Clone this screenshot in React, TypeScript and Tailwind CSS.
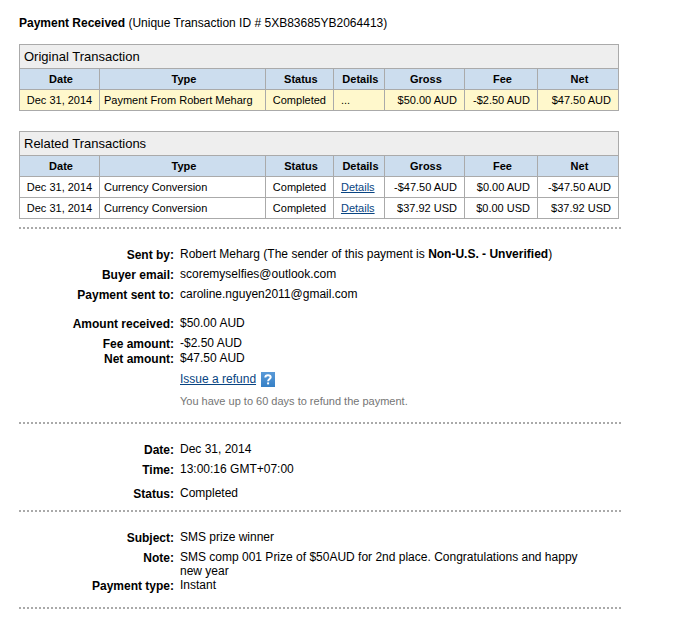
import type { ReactNode } from "react"

type Transaction = {
  date: string
  type: string
  status: string
  hasDetails: boolean
  gross: string
  fee: string
  net: string
}

const original: Transaction[] = [
  {
    date: "Dec 31, 2014",
    type: "Payment From Robert Meharg",
    status: "Completed",
    hasDetails: false,
    gross: "$50.00 AUD",
    fee: "-$2.50 AUD",
    net: "$47.50 AUD",
  },
]

const related: Transaction[] = [
  {
    date: "Dec 31, 2014",
    type: "Currency Conversion",
    status: "Completed",
    hasDetails: true,
    gross: "-$47.50 AUD",
    fee: "$0.00 AUD",
    net: "-$47.50 AUD",
  },
  {
    date: "Dec 31, 2014",
    type: "Currency Conversion",
    status: "Completed",
    hasDetails: true,
    gross: "$37.92 USD",
    fee: "$0.00 USD",
    net: "$37.92 USD",
  },
]

const columns = [
  { name: "Date", width: "w-[80px]" },
  { name: "Type", width: "w-auto" },
  { name: "Status", width: "w-[68px]" },
  { name: "Details", width: "w-[51px]" },
  { name: "Gross", width: "w-[80px]" },
  { name: "Fee", width: "w-[73px]" },
  { name: "Net", width: "w-[81px]" },
]

const cell = "border border-[#aaa] whitespace-nowrap"

function TransactionTable({
  title,
  rows,
  highlight = false,
}: {
  title: string
  rows: Transaction[]
  highlight?: boolean
}) {
  return (
    <table className="w-full table-fixed border-collapse text-[11px] leading-[14px]">
      <colgroup>
        {columns.map((c) => (
          <col key={c.name} className={c.width} />
        ))}
      </colgroup>
      <thead>
        <tr className="h-6 bg-[#eee]">
          <th colSpan={7} className={`${cell} pl-1 text-left text-[13px] font-normal`}>
            {title}
          </th>
        </tr>
        <tr className="h-[21px] bg-[#cde]">
          {columns.map((c) => (
            <th key={c.name} scope="col" className={`${cell} pl-[3px] text-center font-bold`}>
              {c.name}
            </th>
          ))}
        </tr>
      </thead>
      <tbody>
        {rows.map((row, i) => (
          <tr key={i} className={highlight ? "h-[21px] bg-[#fff8cc]" : "h-[21px] bg-white"}>
            <td className={`${cell} text-center`}>{row.date}</td>
            <td className={`${cell} pl-1`}>{row.type}</td>
            <td className={`${cell} text-center`}>{row.status}</td>
            <td className={`${cell} pl-[7px]`}>
              {row.hasDetails ? (
                <a href="#details" className="text-[#084482] underline">
                  Details
                </a>
              ) : (
                "..."
              )}
            </td>
            <td className={`${cell} pr-[7px] text-right`}>{row.gross}</td>
            <td className={`${cell} pr-[7px] text-right`}>{row.fee}</td>
            <td className={`${cell} pr-[7px] text-right`}>{row.net}</td>
          </tr>
        ))}
      </tbody>
    </table>
  )
}

function Divider() {
  return (
    <hr className="h-0.5 border-0 bg-[repeating-linear-gradient(to_right,#aaa_0px,#aaa_2px,transparent_2px,transparent_4px)]" />
  )
}

function Field({ label, className = "", children }: { label: string; className?: string; children: ReactNode }) {
  return (
    <div className={`flex gap-1.5 ${className}`}>
      <dt className="w-[155px] shrink-0 pt-px text-right font-bold">{label}:</dt>
      <dd className="min-w-0 max-w-[420px]">{children}</dd>
    </div>
  )
}

export default function App() {
  return (
    <main className="min-h-screen bg-white px-[19px] pt-4 pb-3 font-['Liberation_Sans',Arial,sans-serif] text-[12px] leading-[14px] text-black">
      <div className="max-w-[602px]">
        <h1 className="mb-[14px]">
          <strong>Payment Received</strong> (Unique Transaction ID # 5XB83685YB2064413)
        </h1>

        <div className="mb-2 flex flex-col gap-5 pr-0.5">
          <TransactionTable title="Original Transaction" rows={original} highlight />
          <TransactionTable title="Related Transactions" rows={related} />
        </div>

        <Divider />
        <dl className="pt-[18px]">
          <Field label="Sent by" className="mb-[5px]">
            Robert Meharg (The sender of this payment is <strong>Non-U.S. - Unverified</strong>)
          </Field>
          <Field label="Buyer email" className="mb-[5px]">
            scoremyselfies@outlook.com
          </Field>
          <Field label="Payment sent to" className="mb-[14px]">
            caroline.nguyen2011@gmail.com
          </Field>
          <Field label="Amount received" className="mb-[5px]">
            $50.00 AUD
          </Field>
          <Field label="Fee amount">-$2.50 AUD</Field>
          <Field label="Net amount">$47.50 AUD</Field>
        </dl>
        <div className="pt-1.5 pb-[14px] pl-[161px]">
          <div className="flex gap-[5px]">
            <a href="#refund" className="text-[#084482] underline">
              Issue a refund
            </a>
            <button type="button" aria-label="Help" className="h-[15px] w-[14px]">
              <svg viewBox="0 0 14 15" className="h-[15px] w-[14px]" fill="none">
                <defs>
                  <linearGradient id="help" x1="0" y1="0" x2="0" y2="1">
                    <stop offset="0" stopColor="#5a9ad8" />
                    <stop offset="1" stopColor="#3580c6" />
                  </linearGradient>
                </defs>
                <rect width="14" height="15" fill="url(#help)" />
                <path
                  d="M4.3 5.6C4.3 4 5.3 3.2 7 3.2S9.7 4 9.7 5.3C9.7 7 7.1 7 7.1 9.2"
                  stroke="#fff"
                  strokeWidth="2"
                />
                <path d="M7.1 10.4v2" stroke="#fff" strokeWidth="2" />
              </svg>
            </button>
          </div>
          <p className="mt-[7px] text-[11px] text-[#757575]">You have up to 60 days to refund the payment.</p>
        </div>

        <Divider />
        <dl className="pt-[18px] pb-[9px]">
          <Field label="Date" className="mb-[5px]">
            Dec 31, 2014
          </Field>
          <Field label="Time" className="mb-[9px]">
            13:00:16 GMT+07:00
          </Field>
          <Field label="Status">Completed</Field>
        </dl>

        <Divider />
        <dl className="pt-[18px] pb-[14px]">
          <Field label="Subject" className="mb-[5px]">
            SMS prize winner
          </Field>
          <Field label="Note">SMS comp 001 Prize of $50AUD for 2nd place. Congratulations and happy new year</Field>
          <Field label="Payment type">Instant</Field>
        </dl>
        <Divider />
      </div>
    </main>
  )
}
